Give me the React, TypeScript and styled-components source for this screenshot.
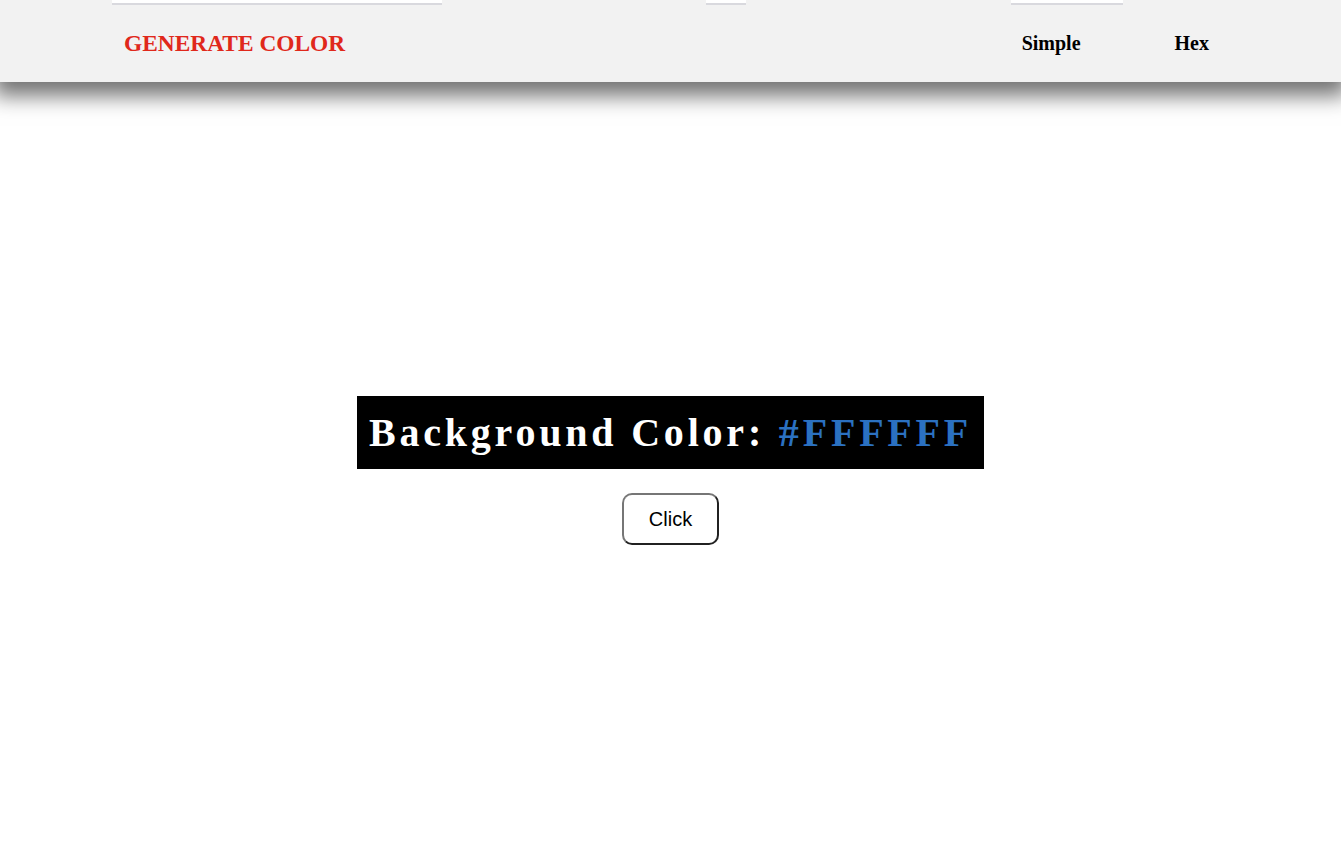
import styled, { createGlobalStyle } from "styled-components";
import { useState } from "react";

const GlobalStyle = createGlobalStyle`
    html, body {
        margin: 0;
        padding: 0;
        background: #ffffff;
        font-family: "Liberation Serif", "Times New Roman", serif;
    }
`;

const Header = styled.header`
    display: flex;
    flex-direction: column;
    height: 82px;
    background: #f2f2f2;
    box-shadow: 0 8px 20px 6px rgba(0, 0, 0, 0.55);
    position: relative;
    z-index: 1;
`;

const TopStrip = styled.div`
    display: flex;
    height: 5px;
`;

const StripSegment = styled.span<{ $offset: number; $width: number }>`
    margin-left: ${p => p.$offset}px;
    width: ${p => p.$width}px;
    height: 3px;
    background: #ffffff;
    border-bottom: 2px solid #d9d9de;
`;

const NavBar = styled.nav`
    flex: 1;
    display: flex;
    align-items: center;
    justify-content: space-between;
    padding: 0 132px 0 124px;
`;

const Logo = styled.a`
    color: #e0281b;
    font-size: 23.4px;
    font-weight: bold;
    text-decoration: none;
    cursor: pointer;
`;

const NavLinks = styled.ul`
    display: flex;
    gap: 94px;
    list-style: none;
    margin: 0;
    padding: 0;
`;

const NavLink = styled.a`
    color: #000000;
    font-size: 20px;
    font-weight: bold;
    text-decoration: none;
    cursor: pointer;
`;

const Main = styled.main`
    display: flex;
    flex-direction: column;
    align-items: center;
    justify-content: center;
    gap: 24px;
    min-height: calc(100vh - 86px);
`;

const ColorTitle = styled.h1`
    margin: 0;
    padding: 13px 12px;
    background: #000000;
    color: #ffffff;
    font-size: 40px;
    font-weight: bold;
    letter-spacing: 3.8px;
    line-height: normal;
    white-space: nowrap;
`;

const HexValue = styled.span`
    color: #2b71c1;
`;

const ClickButton = styled.button`
    padding: 12px 25px;
    background: #ffffff;
    border: 2px outset #767676;
    border-radius: 10px;
    font-family: "Liberation Sans", Arial, sans-serif;
    font-size: 20px;
    line-height: 24px;
    color: #000000;
    cursor: pointer;
`;

const strips = [
    { offset: 112, width: 330 },
    { offset: 264, width: 40 },
    { offset: 265, width: 112 },
];

export default function App() {
    const [color, setColor] = useState("#FFFFFF");

    const handleClick = () => {
        const hex = "#" + Math.floor(Math.random() * 0xffffff).toString(16).padStart(6, "0").toUpperCase();
        setColor(hex);
    };

    return (
        <>
            <GlobalStyle />
            <Header>
                <TopStrip>
                    {strips.map((s, i) => <StripSegment key={i} $offset={s.offset} $width={s.width} />)}
                </TopStrip>
                <NavBar>
                    <Logo>GENERATE COLOR</Logo>
                    <NavLinks>
                        <li><NavLink>Simple</NavLink></li>
                        <li><NavLink>Hex</NavLink></li>
                    </NavLinks>
                </NavBar>
            </Header>
            <Main style={{ background: color === "#FFFFFF" ? undefined : color }}>
                <ColorTitle>Background Color: <HexValue>{color}</HexValue></ColorTitle>
                <ClickButton onClick={handleClick}>Click</ClickButton>
            </Main>
        </>
    );
}
